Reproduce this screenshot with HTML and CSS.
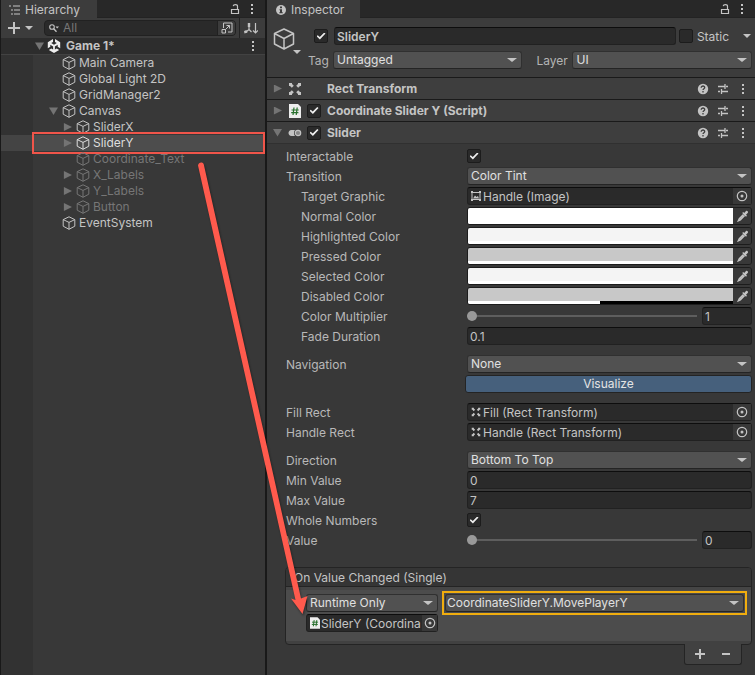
FILE: index.html
```html
<!DOCTYPE html>
<html lang="en">
<head>
<meta charset="utf-8">
<title>Editor</title>
<link rel="stylesheet" href="styles.css">
</head>
<body>
<svg class="defs" aria-hidden="true">
  <symbol id="cube" viewBox="0 0 14 14"><path d="M7 .8 12.8 3.6V10.2L7 13.3 1.2 10.2V3.6ZM1.2 3.6 7 6.4 12.8 3.6M7 6.4V13.3" fill="none" stroke="currentColor" stroke-linejoin="round"/></symbol>
  <symbol id="lock" viewBox="0 0 10 12"><path d="M1.5 6.5h7v4h-7ZM7.5 6V3.2C7.500 1 3.500 1 3.200 3.200" fill="none" stroke="currentColor" stroke-width="1.200"/></symbol>
  <symbol id="dots" viewBox="0 0 4 12"><path d="M1 1h2v2H1ZM1 5h2v2H1ZM1 9h2v2H1Z" fill="currentColor"/></symbol>
  <symbol id="help" viewBox="0 0 12 12"><circle cx="6" cy="6" r="5.200" fill="currentColor"/><path d="M4.200 4.800C4.200 2.300 7.900 2.500 7.700 4.600 7.600 5.700 6 5.700 6 7.100M6 8v1.400" fill="none" stroke="#3e3e3e" stroke-width="1.300"/></symbol>
  <symbol id="preset" viewBox="0 0 12 12"><path d="M1 3.500h6.500M9 3.500h2M8 1v5M1 8.500h2M5 8.500h6M4.500 6v5" fill="none" stroke="currentColor" stroke-width="1.300"/></symbol>
  <symbol id="rect" viewBox="0 0 14 14"><path d="M1 1h3v1l1.800 1.800L3.800 5.800 2 4H1ZM13 1h-3v1L8.200 3.800l2 2L12 4h1ZM1 13h3v-1l1.800-1.800-2-2L2 10H1ZM13 13h-3v-1l-1.800-1.800 2-2L12 10h1Z" fill="currentColor"/></symbol>
  <symbol id="script" viewBox="0 0 12 14"><path d="M0 0h9l3 3v11H0Z" fill="#eee"/><path d="M5 3.500 4 11M8.200 3.500 7.200 11M2.500 6h7.200M2.200 8.700h7.200" fill="none" stroke="#28702d" stroke-width="1.200"/></symbol>
  <symbol id="pick" viewBox="0 0 12 12"><circle cx="6" cy="6" r="4.700" fill="none" stroke="currentColor" stroke-width="1.200"/><circle cx="6" cy="6" r="1.500" fill="currentColor"/></symbol>
  <symbol id="dropper" viewBox="0 0 12 12"><path d="M6.500 4.500 2.300 8.700 1.300 10.800 3.400 9.800 7.600 5.600" fill="none" stroke="currentColor" stroke-width="1.400"/><path d="M5.200 3 6.200 2l1 .9L9 1c1-.8 2.600.6 1.900 1.800L9 4.800l1 1-1 1Z" fill="currentColor"/></symbol>
</svg>
<main class="editor">
  <section class="hierarchy">
    <header class="tabs">
      <h2 class="tab tab-hierarchy"><svg width="12" height="10" viewBox="0 0 12 10"><path d="M0 1h2M4 1h7M2 5h2M5 5h6M2 9h2M5 9h6" stroke="currentColor" stroke-width="1.200"/></svg>Hierarchy</h2>
      <button class="icon-btn" aria-label="Lock"><svg width="10" height="12"><use href="#lock"/></svg></button>
      <button class="icon-btn" aria-label="Menu"><svg width="4" height="12"><use href="#dots"/></svg></button>
    </header>
    <div class="toolbar">
      <button class="icon-btn add" aria-label="Create"><svg width="12" height="12" viewBox="0 0 12 12"><path d="M6 0v12M0 6h12" stroke="currentColor" stroke-width="2"/></svg><i class="caret"></i></button>
      <div class="search">
        <svg width="10" height="10" viewBox="0 0 10 10"><circle cx="3" cy="4" r="2.300" fill="none" stroke="currentColor" stroke-width="1.100"/><path d="m4.700 5.700 2.800 3" stroke="currentColor" stroke-width="1.300"/><path d="M6.500 3.500H10L8.200 5.500Z" fill="currentColor"/></svg>
        <input type="text" placeholder="All" aria-label="Search">
        <button class="icon-btn open-search" aria-label="Open search"><svg width="12" height="12" viewBox="0 0 12 12"><path d="M2.500 6V1h8.500v9H7M1 7.500h3.500V11H1ZM4.500 7.500 8.500 3.500M5.500 3.500h3v3" fill="none" stroke="currentColor"/></svg></button>
      </div>
      <button class="icon-btn sort" aria-label="Sort"><svg width="14" height="13" viewBox="0 0 14 13"><path d="M5 3v4.500L1.500 10.500M5 7.500l2.500 2.500M11.500 1v10M9 8.500l2.500 2.500L14 8.500" fill="none" stroke="currentColor" stroke-width="1.200"/><path d="M3.800 1h2.400v4H3.800ZM0 9l2.500-1 1 2.500-3 1Z" fill="currentColor"/></svg></button>
    </div>
    <div class="tree">
      <div class="row scene"><i class="fold open"></i><svg class="logo" width="14" height="14" viewBox="0 0 14 14"><path d="M6 0v3L4.200 4.100 7 5.700l2.800-1.600L8 3V0l5.200 3.200v6L10.700 7.700V5.800L7.900 7.400v3.200l1.800-1L12.200 11 7 14 1.800 11l2.500-1.400 1.800 1V7.400L3.300 5.800v1.900L.8 9.200v-6Z" fill="#eee"/></svg><strong>Game 1*</strong><button class="icon-btn" aria-label="Scene menu"><svg width="4" height="12"><use href="#dots"/></svg></button></div>
      <ul class="objects">
        <li class="row"><svg class="cube"><use href="#cube"/></svg>Main Camera</li>
        <li class="row"><svg class="cube"><use href="#cube"/></svg>Global Light 2D</li>
        <li class="row"><svg class="cube"><use href="#cube"/></svg>GridManager2</li>
        <li class="row"><i class="fold open"></i><svg class="cube"><use href="#cube"/></svg>Canvas</li>
        <li class="row child"><i class="fold"></i><svg class="cube"><use href="#cube"/></svg>SliderX</li>
        <li class="row child selected"><i class="fold"></i><svg class="cube"><use href="#cube"/></svg>SliderY</li>
        <li class="row child off"><svg class="cube"><use href="#cube"/></svg>Coordinate_Text</li>
        <li class="row child off"><i class="fold"></i><svg class="cube"><use href="#cube"/></svg>X_Labels</li>
        <li class="row child off"><i class="fold"></i><svg class="cube"><use href="#cube"/></svg>Y_Labels</li>
        <li class="row child off"><i class="fold"></i><svg class="cube"><use href="#cube"/></svg>Button</li>
        <li class="row"><svg class="cube"><use href="#cube"/></svg>EventSystem</li>
      </ul>
    </div>
  </section>

  <section class="inspector">
    <header class="tabs">
      <h2 class="tab tab-inspector"><svg width="10" height="10" viewBox="0 0 10 10"><circle cx="5" cy="5" r="5" fill="currentColor"/><path d="M4 1.500h2v1.700H4ZM3.500 4.200H6v3h.8v1H3.300v-1H4v-2h-.5Z" fill="#3c3c3c"/></svg>Inspector</h2>
      <button class="icon-btn" aria-label="Lock"><svg width="10" height="12"><use href="#lock"/></svg></button>
      <button class="icon-btn" aria-label="Menu"><svg width="4" height="12"><use href="#dots"/></svg></button>
    </header>
    <div class="object-head">
      <div class="object-icon"><svg width="22" height="22" viewBox="0 0 22 22"><path d="M11 1 20.500 5.500V16L11 21 1.500 16V5.500ZM1.500 5.500 11 10.500 20.500 5.500M11 10.500V21" fill="none" stroke="#c4c4c4" stroke-width="1.500" stroke-linejoin="round"/></svg><i class="caret"></i></div>
      <div class="head-lines">
        <div class="name-line">
          <input type="checkbox" checked aria-label="Active">
          <input class="field name" type="text" value="SliderY" aria-label="Name">
          <input type="checkbox" id="static"><label for="static">Static</label>
          <button class="icon-btn static-menu" aria-label="Static options"><i class="caret"></i></button>
        </div>
        <div class="tag-line">
          <label for="tag">Tag</label><span class="drop"><select id="tag"><option>Untagged</option></select></span>
          <label for="layer">Layer</label><span class="drop"><select id="layer"><option>UI</option></select></span>
        </div>
      </div>
    </div>

    <div class="component"><i class="fold"></i><svg width="14" height="14"><use href="#rect"/></svg><span class="no-check"></span><h3>Rect Transform</h3>
      <button class="icon-btn" aria-label="Help"><svg width="12" height="12"><use href="#help"/></svg></button><button class="icon-btn" aria-label="Presets"><svg width="12" height="12"><use href="#preset"/></svg></button><button class="icon-btn" aria-label="More"><svg width="4" height="12"><use href="#dots"/></svg></button></div>
    <div class="component"><i class="fold"></i><svg width="14" height="14"><use href="#script"/></svg><input type="checkbox" checked aria-label="Enable script"><h3>Coordinate Slider Y (Script)</h3>
      <button class="icon-btn" aria-label="Help"><svg width="12" height="12"><use href="#help"/></svg></button><button class="icon-btn" aria-label="Presets"><svg width="12" height="12"><use href="#preset"/></svg></button><button class="icon-btn" aria-label="More"><svg width="4" height="12"><use href="#dots"/></svg></button></div>
    <div class="component"><i class="fold open"></i><svg width="14" height="14" viewBox="0 0 14 14"><path d="M3.500 4H9v6H3.500C-.5 10-.5 4 3.500 4Z" fill="#c4c4c4"/><circle cx="10" cy="7" r="4" fill="#3e3e3e"/><circle cx="10" cy="7" r="2.700" fill="#888" stroke="#c4c4c4" stroke-width="1.200"/></svg><input type="checkbox" checked aria-label="Enable slider"><h3>Slider</h3>
      <button class="icon-btn" aria-label="Help"><svg width="12" height="12"><use href="#help"/></svg></button><button class="icon-btn" aria-label="Presets"><svg width="12" height="12"><use href="#preset"/></svg></button><button class="icon-btn" aria-label="More"><svg width="4" height="12"><use href="#dots"/></svg></button></div>

    <div class="props">
      <div class="group">
        <div class="prop"><label for="inter">Interactable</label><input type="checkbox" id="inter" checked></div>
        <div class="prop"><label for="trans">Transition</label><span class="drop"><select id="trans"><option>Color Tint</option></select></span></div>
        <div class="prop sub"><span>Target Graphic</span><div class="field object"><svg width="10" height="10" viewBox="0 0 10 10"><path d="M1 1.500h8v7H1Z" fill="none" stroke="currentColor"/><path d="M0 0h2v2H0ZM8 0h2v2H8ZM0 8h2v2H0ZM8 8h2v2H8ZM2 7.500l2-3 1.500 1.500L7 5l1 2.500Z" fill="currentColor"/></svg><span>Handle (Image)</span><button aria-label="Pick target"><svg width="12" height="12"><use href="#pick"/></svg></button></div></div>
        <div class="prop sub"><span>Normal Color</span><div class="color"><span class="swatch normal"></span><button aria-label="Sample normal color"><svg width="12" height="12"><use href="#dropper"/></svg></button></div></div>
        <div class="prop sub"><span>Highlighted Color</span><div class="color"><span class="swatch light"></span><button aria-label="Sample highlighted color"><svg width="12" height="12"><use href="#dropper"/></svg></button></div></div>
        <div class="prop sub"><span>Pressed Color</span><div class="color"><span class="swatch gray"></span><button aria-label="Sample pressed color"><svg width="12" height="12"><use href="#dropper"/></svg></button></div></div>
        <div class="prop sub"><span>Selected Color</span><div class="color"><span class="swatch light"></span><button aria-label="Sample selected color"><svg width="12" height="12"><use href="#dropper"/></svg></button></div></div>
        <div class="prop sub"><span>Disabled Color</span><div class="color"><span class="swatch gray half"></span><button aria-label="Sample disabled color"><svg width="12" height="12"><use href="#dropper"/></svg></button></div></div>
        <div class="prop sub"><label for="mult">Color Multiplier</label><div class="slider"><input type="range" id="mult" min="1" max="5" value="1"><input class="field" type="text" value="1" aria-label="Color Multiplier value"></div></div>
        <div class="prop sub"><label for="fade">Fade Duration</label><input class="field" id="fade" type="text" value="0.1"></div>
      </div>
      <div class="group">
        <div class="prop"><label for="nav">Navigation</label><span class="drop"><select id="nav"><option>None</option></select></span></div>
        <div class="prop"><span></span><button class="visualize">Visualize</button></div>
      </div>
      <div class="group">
        <div class="prop"><span>Fill Rect</span><div class="field object"><svg width="10" height="10"><use href="#rect"/></svg><span>Fill (Rect Transform)</span><button aria-label="Pick fill"><svg width="12" height="12"><use href="#pick"/></svg></button></div></div>
        <div class="prop"><span>Handle Rect</span><div class="field object"><svg width="10" height="10"><use href="#rect"/></svg><span>Handle (Rect Transform)</span><button aria-label="Pick handle"><svg width="12" height="12"><use href="#pick"/></svg></button></div></div>
      </div>
      <div class="group">
        <div class="prop"><label for="dir">Direction</label><span class="drop"><select id="dir"><option>Bottom To Top</option></select></span></div>
        <div class="prop"><label for="min">Min Value</label><input class="field" id="min" type="text" value="0"></div>
        <div class="prop"><label for="max">Max Value</label><input class="field" id="max" type="text" value="7"></div>
        <div class="prop"><label for="whole">Whole Numbers</label><input type="checkbox" id="whole" checked></div>
        <div class="prop"><label for="value">Value</label><div class="slider"><input type="range" id="value" min="0" max="7" value="0"><input class="field" type="text" value="0" aria-label="Value number"></div></div>
      </div>
    </div>

    <div class="event">
      <div class="event-box">
        <h4>On Value Changed (Single)</h4>
        <div class="event-body">
          <div class="event-left">
            <span class="drop"><select aria-label="Call state"><option>Runtime Only</option></select></span>
            <div class="field object"><svg width="10" height="12"><use href="#script"/></svg><span>SliderY (Coordina</span><button aria-label="Pick listener"><svg width="12" height="12"><use href="#pick"/></svg></button></div>
          </div>
          <span class="drop marked"><select aria-label="Function"><option>CoordinateSliderY.MovePlayerY</option></select></span>
        </div>
      </div>
      <div class="event-foot">
        <button aria-label="Add"><svg width="10" height="10" viewBox="0 0 10 10"><path d="M5 0v10M0 5h10" stroke="currentColor" stroke-width="2"/></svg></button>
        <button aria-label="Remove"><svg width="10" height="10" viewBox="0 0 10 10"><path d="M1 5h8" stroke="currentColor" stroke-width="2"/></svg></button>
      </div>
    </div>
  </section>
  <svg class="arrow" width="120" height="460" viewBox="0 0 120 460" aria-hidden="true"><path d="M8 5.500C8.500 2 12.800 1.500 13.800 4.500L111 438.500 117.500 436 112.500 454 101 438.500 105.500 440Z" fill="#ff5a4d"/></svg>
</main>
</body>
</html>
```

FILE: styles.css
```css
* { box-sizing: border-box; }
body { margin: 0; background: #383838; color: #c4c4c4; font: 12px/16px Inter, "Liberation Sans", sans-serif; }
h2, h3, h4, ul { margin: 0; padding: 0; font-size: inherit; font-weight: 400; list-style: none; }
button, input, select { font: inherit; color: inherit; margin: 0; padding: 0; }
button { display: flex; align-items: center; justify-content: center; border: 0; background: none; }
svg { display: block; flex: none; }
.defs { position: absolute; width: 0; height: 0; }

.editor { position: relative; display: grid; grid-template-columns: 267px minmax(0, 1fr); min-height: 100vh; }
.hierarchy { display: flex; flex-direction: column; min-width: 0; border: solid #191919; border-width: 0 2px 0 1px; }
.inspector { min-width: 0; }

.tabs { display: flex; height: 18px; background: #282828; padding-right: 11px; gap: 10px; border-bottom: 1px solid #232323; }
.tab { display: flex; align-items: center; height: 18px; gap: 4px; background: #3c3c3c; margin-right: auto; }
.tab-hierarchy { padding: 1px 17px 0 8px; }
.tab-inspector { padding: 1px 16px 0 9px; gap: 5px; }
.caret { border: 4px solid transparent; border-top-color: #c4c4c4; border-bottom: 0; }

.toolbar { display: flex; align-items: center; height: 20px; background: #3c3c3c; }
.add { gap: 5px; margin: 0 11px 0 7px; }
.search { flex: 1; min-width: 0; display: flex; align-items: center; height: 16px; padding-left: 4px; gap: 4px; background: #2a2a2a; border: 1px solid #212121; border-radius: 4px; overflow: hidden; }
.search input { flex: 1; width: 0; min-width: 0; height: 14px; background: none; border: 0; }
.search input::placeholder { color: #777; }
.open-search { width: 18px; height: 14px; background: #3c3c3c; border-left: 1px solid #212121; }
.sort { width: 26px; height: 20px; margin-left: 3px; padding-right: 3px; border-left: 1px solid #232323; }

.tree { flex: 1; background: linear-gradient(90deg, #323232 32px, #383838 32px); }
.row { display: flex; align-items: center; height: 16px; position: relative; padding-left: 61px; }
.row .cube { width: 14px; height: 14px; margin-right: 3px; }
.child { padding-left: 75px; }
.scene { height: 17px; padding: 0 10px 0 51px; background: #2d2d2d; border-bottom: 1px solid #424242; }
.scene .logo { margin: 0 5px 0 -4px; }
.scene .icon-btn { margin-left: auto; }
.fold { width: 9px; height: 8px; background: #747474; clip-path: polygon(10% 0, 100% 50%, 10% 100%); }
.fold.open { clip-path: polygon(0 5%, 100% 5%, 50% 100%); }
.row .fold { margin: 0 4px 0 -13px; }
.row.scene .fold { margin: 0 7px 0 -17px; }
.selected { background: linear-gradient(90deg, #444 32px, #4d4d4d 32px); color: #ddd; }
.selected::after { content: ""; position: absolute; inset: -3px 0 -3px 31px; border: 2px solid #f0554a; }
.off { color: #767676; }

input[type="checkbox"] { appearance: none; flex: none; width: 14px; height: 14px; background: #2a2a2a; border: 1px solid #1c1c1c; border-radius: 2px; display: grid; place-items: center; }
input[type="checkbox"]:checked::after { content: ""; width: 9px; height: 7px; background: #eee; clip-path: polygon(0 55%, 14% 38%, 36% 66%, 86% 0, 100% 14%, 38% 100%); }
.field { display: block; width: 100%; min-width: 0; height: 18px; padding: 0 2px; background: #2a2a2a; border: 1px solid #212121; border-top-color: #0d0d0d; border-radius: 3px; }
.drop { display: block; position: relative; min-width: 0; }
.drop::after { content: ""; position: absolute; right: 5px; top: 7px; border: 5px solid transparent; border-top: 4px solid #c4c4c4; border-bottom: 0; pointer-events: none; }
.drop select { appearance: none; display: block; width: 100%; height: 18px; padding: 0 16px 0 3px; color: #e0e0e0; background: #515151; border: 1px solid #303030; border-bottom-color: #242424; border-radius: 3px; }

.object-head { display: flex; height: 59px; padding: 9px 3px 0 6px; background: #3c3c3c; }
.object-icon { width: 35px; padding-top: 1px; }
.object-icon .caret { display: block; width: 8px; margin: 0 0 0 20px; }
.head-lines { flex: 1; display: grid; gap: 6px; align-content: start; }
.name-line { display: flex; align-items: center; height: 18px; padding-left: 6px; }
.name { flex: 1; margin: 0 3px 0 6px; font-weight: 600; }
.name-line label { margin: 0 12px 0 4px; padding-top: 1px; }
.static-menu { width: 11px; }
.tag-line { display: grid; grid-template-columns: 25px 190fr 50px 180fr; align-items: center; color: #b4b4b4; }
.tag-line label { padding-top: 2px; }
.tag-line label + .drop + label { padding-left: 14px; }

.component { display: flex; align-items: center; height: 22px; padding: 0 10px 0 6px; background: #3e3e3e; border-top: 1px solid #1a1a1a; }
.component > svg { margin: 0 5px 0 6px; }
.component h3 { flex: 1; font-weight: 700; margin-left: 6px; }
.component .icon-btn { margin-left: 8px; }
.component .icon-btn:last-child { margin-left: 12px; }
.no-check { width: 14px; }

.props { padding: 3px 3px 0 19px; border-top: 1px solid #303030; display: grid; gap: 10px; }
.group { display: grid; gap: 2px; }
.prop { display: grid; grid-template-columns: 181px minmax(0, 1fr); align-items: center; height: 18px; }
.prop > :first-child { color: #b8b8b8; padding-top: 1px; }
.sub > :first-child { padding-left: 15px; }
.object { display: flex; align-items: center; padding: 0 0 0 3px; gap: 2px; }
.object span { flex: 1; min-width: 0; white-space: nowrap; padding-top: 1px; }
.object button, .color button { flex: none; width: 18px; height: 16px; background: #383838; }
.color { display: flex; height: 18px; border: 1px solid #1c1c1c; border-radius: 3px; overflow: hidden; }
.color button { padding-left: 2px; }
.swatch { flex: 1; border-bottom: 3px solid #fff; }
.normal { background: #fff; }
.light { background: #f4f4f4; }
.gray { background: #c8c8c8; }
.half { border-bottom: 0; background: linear-gradient(90deg, #fff 50%, #000 50%) bottom / 100% 3px no-repeat #c8c8c8; }
.slider { display: grid; grid-template-columns: 1fr 50px; gap: 5px; align-items: center; }
input[type="range"] { appearance: none; width: 100%; min-width: 0; height: 18px; background: linear-gradient(#5e5e5e, #5e5e5e) center / 100% 2px no-repeat; }
input[type="range"]::-webkit-slider-thumb { appearance: none; width: 10px; height: 10px; border-radius: 50%; background: #999; }
.visualize { height: 18px; margin-left: -2px; color: #e4e4e4; background: #46607c; border: 1px solid #242424; border-radius: 3px; }

.event { padding: 18px 3px 10px 18px; border-bottom: 1px solid #1a1a1a; }
.event-box { border: 1px solid #242424; border-radius: 4px; background: #414141; }
.event-box h4 { height: 19px; padding: 2px 8px 0; background: #353535; border-bottom: 1px solid #242424; border-radius: 3px 3px 0 0; }
.event-body { display: grid; grid-template-columns: 132px minmax(0, 1fr); gap: 4px; align-items: start; height: 54px; padding: 4px 4px 0 20px; margin-bottom: 3px; border-top: 3px solid #454545; background: #4c4c4c; }
.event-left { display: grid; gap: 2px; }
.event-left .object { gap: 1px; }
.event-left .object button { width: 15px; }
.marked { border: 2px solid #f0ad0e; padding: 1px; margin-top: -3px; }
.marked::after { top: 8px; right: 6px; }
.marked select { padding-left: 1px; }
.event-foot { display: flex; justify-content: center; width: 58px; height: 21px; margin: -1px 10px 0 auto; background: #414141; border: 1px solid #242424; border-top: 0; border-radius: 0 0 3px 3px; position: relative; }
.event-foot button { width: 26px; }

.arrow { position: absolute; left: 190px; top: 160px; pointer-events: none; filter: drop-shadow(1px 2px 1px #0006); }
```
